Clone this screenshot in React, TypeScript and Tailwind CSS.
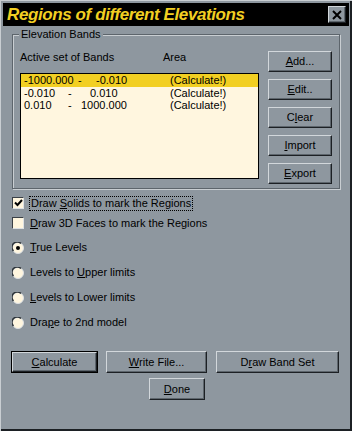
import React from "react";

const raised =
  "bg-[#8e979f] border border-t-[#d2d7db] border-l-[#d2d7db] border-r-[#1c2024] border-b-[#1c2024] shadow-[inset_-1px_-1px_0_#5d656c]";

const U = ({ children }: { children: React.ReactNode }) => <span className="underline underline-offset-[1px]">{children}</span>;

const Btn = ({ children, className = "" }: { children: React.ReactNode; className?: string }) => (
  <button className={`${raised} flex items-center justify-center text-[11px] text-black ${className}`}>{children}</button>
);

const rows = [
  { a: "-1000.000", b: "-0.010", w: ["w-[54px]", "w-[18px]", "w-[74px]"] },
  { a: "-0.010", b: "0.010", w: ["w-[44px]", "w-[22px]", "w-[80px]"] },
  { a: "0.010", b: "1000.000", w: ["w-[44px]", "w-[13px]", "w-[89px]"] },
];

const Check = ({ checked }: { checked?: boolean }) => (
  <span className="w-[12px] h-[12px] shrink-0 bg-[#fff6df] border border-t-[#3a4046] border-l-[#3a4046] border-r-[#dde1e4] border-b-[#dde1e4] flex items-center justify-center">
    {checked && (
      <svg width="9" height="8" viewBox="0 0 9 8">
        <path d="M1 3.5 L3.5 6 L8 1" stroke="black" strokeWidth="2" fill="none" />
      </svg>
    )}
  </span>
);

const Radio = ({ checked }: { checked?: boolean }) => (
  <svg width="12" height="12" viewBox="0 0 12 12" className="shrink-0">
    <circle cx="6" cy="6" r="5.5" fill="#fff6df" stroke="#dde1e4" />
    <path d="M1.5 9 A5 5 0 0 1 9 1.5" stroke="#2e3439" strokeWidth="1.5" fill="none" />
    {checked && <circle cx="6" cy="6" r="2" fill="black" />}
  </svg>
);

export default function App() {
  return (
    <div className="w-[352px] h-[431px] bg-[#8e979f] p-[3px] shadow-[inset_1px_1px_0_#c9ced2,inset_-2px_-2px_0_#1c2024] font-['Liberation_Sans',Arial,sans-serif] text-[11px] text-black overflow-hidden">
      {/* Title bar */}
      <div className="h-[23px] bg-black flex items-center justify-between pl-[4px] pr-[3px]">
        <span className="text-[#f2cf22] font-bold italic text-[17px] tracking-[-0.4px] leading-none">
          Regions of different Elevations
        </span>
        <div className={`${raised} w-[18px] h-[17px] flex items-center justify-center`}>
          <svg width="10" height="10" viewBox="0 0 10 10">
            <path d="M1 1 L9 9 M9 1 L1 9" stroke="black" strokeWidth="2" />
          </svg>
        </div>
      </div>

      <div className="px-[9px]">
        {/* Group box */}
        <div className="relative mt-[8px] w-[328px] h-[155px] border border-[#5d656c] shadow-[inset_1px_1px_0_#c9ced2,1px_1px_0_#c9ced2] pt-[16px] pl-[7px] pr-[7px] flex gap-[9px]">
          <span className="absolute left-[6px] top-[-8px] px-[2px] bg-[#8e979f] leading-[14px]">Elevation Bands</span>

          <div className="w-[239px] flex flex-col">
            <div className="flex h-[13px] leading-[13px]">
              <span className="w-[143px]">Active set of Bands</span>
              <span>Area</span>
            </div>
            <div className="mt-[9px] h-[106px] bg-[#fff6df] border border-black">
              {rows.map((r, i) => (
                <div
                  key={i}
                  className={`flex h-[12.5px] leading-[12.5px] pl-[3px] ${i === 0 ? "bg-[#f2cf22]" : ""}`}
                >
                  <span className={r.w[0]}>{r.a}</span>
                  <span className={r.w[1]}>-</span>
                  <span className={r.w[2]}>{r.b}</span>
                  <span>(Calculate!)</span>
                </div>
              ))}
            </div>
          </div>

          <div className="flex flex-col gap-[7px]">
            <Btn className="w-[64px] h-[21px]"><U>A</U>dd...</Btn>
            <Btn className="w-[64px] h-[21px]"><U>E</U>dit..</Btn>
            <Btn className="w-[64px] h-[21px]">C<U>l</U>ear</Btn>
            <Btn className="w-[64px] h-[21px]"><U>I</U>mport</Btn>
            <Btn className="w-[64px] h-[21px]"><U>E</U>xport</Btn>
          </div>
        </div>

        {/* Options */}
        <div className="mt-[4px] flex flex-col">
          <div className="h-[20px] flex items-center gap-[5px]">
            <Check checked />
            <span className="border border-dotted border-black px-[1px] leading-[13px]">
              Draw <U>S</U>olids to mark the Regions
            </span>
          </div>
          <div className="h-[20px] flex items-center gap-[6px]">
            <Check />
            <span className="leading-[13px]"><U>D</U>raw 3D Faces to mark the Regions</span>
          </div>
          <div className="mt-[2px] flex flex-col">
            <div className="h-[25px] flex items-center gap-[6px]">
              <Radio checked />
              <span><U>T</U>rue Levels</span>
            </div>
            <div className="h-[25px] flex items-center gap-[6px]">
              <Radio />
              <span>Levels to <U>U</U>pper limits</span>
            </div>
            <div className="h-[25px] flex items-center gap-[6px]">
              <Radio />
              <span><U>L</U>evels to Lower limits</span>
            </div>
            <div className="h-[25px] flex items-center gap-[6px]">
              <Radio />
              <span>Dra<U>p</U>e to 2nd model</span>
            </div>
          </div>
        </div>

        {/* Bottom buttons */}
        <div className="mt-[16px] ml-[-1px] flex">
          <div className="border border-black">
            <Btn className="w-[85px] h-[20px]"><U>C</U>alculate</Btn>
          </div>
          <Btn className="ml-[8px] w-[101px] h-[22px]"><U>W</U>rite File...</Btn>
          <Btn className="ml-[9px] w-[123px] h-[22px]">D<U>r</U>aw Band Set</Btn>
        </div>
        <div className="mt-[5px] flex justify-center pl-[2px]">
          <Btn className="w-[56px] h-[22px]"><U>D</U>one</Btn>
        </div>
      </div>
    </div>
  );
}
